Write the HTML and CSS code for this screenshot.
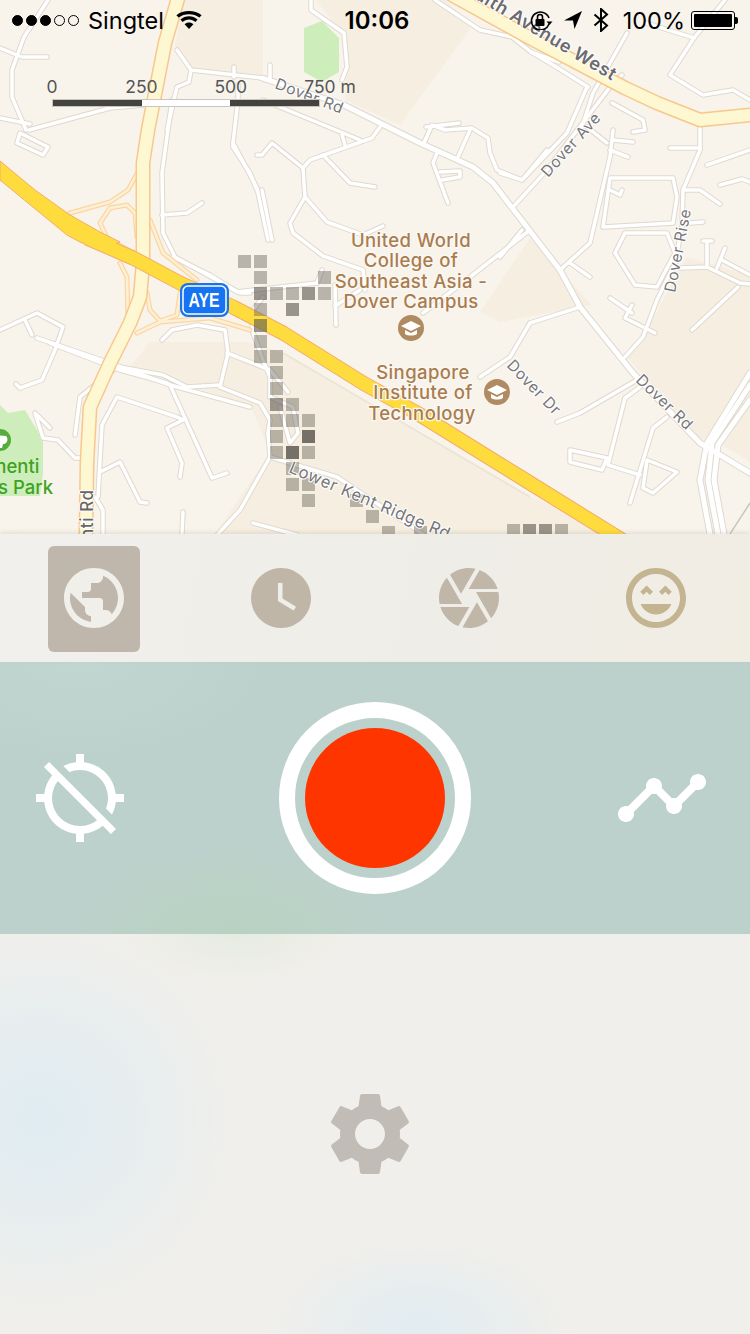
FILE: index.html
```html
<!DOCTYPE html>
<html lang="en">
<head>
  <meta charset="UTF-8">
  <meta name="viewport" content="width=device-width, initial-scale=1.0">
  <title>Tracker</title>
  <link rel="stylesheet" href="styles.css">
</head>
<body>
  <div class="app">

    <section class="map">
      <svg class="map-canvas" width="750" height="534" viewBox="0 0 750 534">
        <defs>
          <g id="minorRoads">
            <!-- top left -->
            <path d="M48 0L24 37L12 70L12 97L26 130"/>
            <path d="M0 48L22 57L47 57"/>
            <path d="M17 143L43 155L48 147L20 133Z"/>
            <path d="M29 130L110 108L143 105"/>
            <path d="M0 118L30 124"/>
            <!-- top middle -->
            <path d="M311 0L311 10L344 33L347 67L342 80"/>
            <path d="M177 50L191 70L263 78"/>
            <path d="M234 67L234 77M270 65L270 78"/>
            <path d="M191 70L189 82L177 87L167 130"/>
            <path d="M238 85L238 100L233 143L257 188L268 240M262 190L272 240"/>
            <path d="M263 100L360 140M342 135L345 145"/>
            <path d="M257 155L262 155L272 143L303 168L305 197L290 223L293 233L323 256L363 270L365 290"/>
            <path d="M305 197L327 222L363 235L383 226"/>
            <path d="M303 168L310 160L372 138L380 127"/>
            <path d="M323 155L350 183L375 187"/>
            <path d="M423 145L432 125L445 130L472 128L488 138L490 153L497 170L522 180L547 150"/>
            <path d="M470 130L458 157"/>
            <path d="M437 153L433 163L448 203"/>
            <path d="M440 172L460 171L460 177L442 180"/>
            <path d="M426 127L459 123"/>
            <path d="M435 0L480 30L512 37L531 52L553 65L588 87L577 80"/>
            <path d="M531 52L559 62"/>
            <path d="M627 33L593 93L581 130"/>
            <path d="M646 23L694 38L670 75L703 95L733 90L750 100"/>
            <path d="M694 38L725 0"/>
            <!-- left of the expressway -->
            <path d="M172 100L162 173L163 233L175 257L240 293L250 293"/>
            <path d="M162 215L187 213L202 203"/>
            <path d="M233 143L233 147L250 173L257 190"/>
            <path d="M0 330L37 313L63 327L55 350L42 380L20 388L16 384"/>
            <path d="M25 320L32 335"/>
            <path d="M37 338L110 363L170 385L250 407"/>
            <path d="M50 343L120 370L167 383"/>
            <path d="M120 367L163 375L187 387L220 385"/>
            <path d="M117 367L80 397L75 435"/>
            <path d="M98 497L102 425L117 397L177 417L183 420"/>
            <path d="M100 472L120 462L140 502L147 503"/>
            <path d="M183 420L167 428L182 463L180 477"/>
            <path d="M170 385L212 478L227 473"/>
            <path d="M50 428L35 413L43 438L58 440L75 458L83 458"/>
            <path d="M162 340L172 330L197 325L225 330L228 353L220 387"/>
            <path d="M95 497L103 510L103 533"/>
            <path d="M183 512L182 533"/>
            <path d="M227 353L270 370L288 392"/>
            <path d="M220 387L260 403L270 420L268 433L270 457L240 510L218 534"/>
            <path d="M270 397L293 407L298 433L290 443L280 407"/>
            <path d="M270 457L337 477L417 530L430 540"/>
            <path d="M253 523L297 535"/>
            <!-- middle -->
            <path d="M317 283L237 292L210 275L173 257"/>
            <path d="M317 283L322 270"/>
            <path d="M263 297L253 310L252 330L263 360L270 377L270 397"/>
            <path d="M335 285L336 325"/>
            <path d="M335 306L360 290"/>
            <path d="M530 230L470 277L423 313"/>
            <path d="M530 323L510 357L480 377"/>
            <!-- right -->
            <path d="M500 173L522 180L567 133L587 87"/>
            <path d="M513 207L547 170L610 87L622 75"/>
            <path d="M560 270L590 243L610 157L613 130"/>
            <path d="M607 143L587 127M613 140L633 142M610 150L628 157"/>
            <path d="M612 103L643 120L645 130L633 132"/>
            <path d="M570 263L590 277"/>
            <path d="M610 178L673 178L677 197L673 223L603 227Z"/>
            <path d="M610 190L620 195L622 190"/>
            <path d="M625 233L667 233L675 253L657 287L635 285L615 253Z"/>
            <path d="M700 123L700 150L683 190L682 227L675 263L657 300L643 337L625 357"/>
            <path d="M670 148L700 148"/>
            <path d="M685 190L700 190L720 204"/>
            <path d="M707 165L750 150"/>
            <path d="M720 185L742 179L750 182"/>
            <path d="M690 223L703 222"/>
            <path d="M703 241L712 241M707 241L707 267L680 268"/>
            <path d="M707 267L740 283L750 284M717 268L725 248M722 260L750 275"/>
            <path d="M738 287L692 330"/>
            <path d="M610 298L632 313M632 305L625 318L655 333"/>
            <path d="M580 307L530 323"/>
            <path d="M637 380L580 413L557 422"/>
            <path d="M640 387L625 398L608 465L640 475"/>
            <path d="M570 450L607 458L602 470L570 462Z"/>
            <path d="M667 417L653 428L638 477L630 503"/>
            <path d="M647 460L677 472L653 493L643 488Z"/>
            <path d="M500 257L522 230"/>
          </g>
          <g id="mainRoads">
            <path d="M262 78L344 105L420 143L473 167L493 183L523 222L560 270L580 307L633 373L700 443L750 473"/>
            <path d="M750 373L707 443L700 480L710 534"/>
            <path d="M750 385L712 443L708 480L718 534"/>
            <path d="M750 400L718 445L714 480L724 534"/>
          </g>
          <g id="ramps">
            <path d="M70 213L110 202L128 190L138 172"/>
            <path d="M137 237L135 213L127 205L110 208L100 223L107 238L133 253"/>
            <path d="M120 263L127 277L128 320"/>
            <path d="M150 220L163 253L197 280"/>
            <path d="M147 293L150 310L160 321L177 315L180 293"/>
            <path d="M137 333L160 322L210 318L250 330"/>
          </g>
          <g id="trunkRoads">
            <path d="M179 -5L165 43L148 130L143 163L143 263L140 297L130 323L110 363L90 407L87 463L86 534"/>
            <path d="M452 -5L530 38L625 88L657 103L700 120L750 115"/>
          </g>
          <g id="capIcon">
            <circle r="13" class="cap-badge"/>
            <path class="cap-glyph" d="M0 -7L10 -2L0 3L-10 -2Z"/>
            <path class="cap-glyph" d="M-6 2L0 5L6 2L6 6C3 8 -3 8 -6 6Z"/>
          </g>
        </defs>

        <rect class="land" width="750" height="534"/>

        <polygon class="area" points="183,0 263,0 263,80 190,68 175,45"/>
        <polygon class="area" points="316,0 445,0 473,25 400,125 345,100 347,40"/>
        <polygon class="area" points="130,367 150,342 250,342 283,353 530,497 630,534 215,534 270,453 250,405 187,385 165,372"/>
        <polygon class="area" points="480,312 530,238 592,305 500,322"/>
        <polygon class="area" points="627,357 643,337 667,293 687,257 750,275 750,370 706,438 700,440"/>
        <polygon class="area" points="722,402 750,372 750,462 722,445"/>
        <polygon class="area-line" points="283,353 530,497"/>

        <polygon class="park" points="304,28 322,21 339,38 339,72 322,82 304,72"/>
        <polygon class="park" points="0,405 8,413 25,410 43,440 43,473 40,496 0,496"/>

        <use href="#minorRoads" class="road-case"/>
        <use href="#mainRoads" class="main-case"/>
        <use href="#minorRoads" class="road-fill"/>
        <use href="#mainRoads" class="main-fill"/>
        <path class="hairline" d="M730 534L750 503"/>

        <use href="#ramps" class="ramp-case"/>
        <use href="#ramps" class="ramp-fill"/>
        <use href="#trunkRoads" class="trunk-case"/>
        <use href="#trunkRoads" class="trunk-fill"/>

        <path class="aye-case" d="M87 238L133 258L180 283L233 307L283 333L363 383L417 413L530 483L630 545"/>
        <polygon class="aye-wide" points="0,161 35,190 70,215 100,232 120,242 100,250 80,242 67,235 0,180"/>
        <path class="aye-fill" d="M87 238L133 258L180 283L233 307L283 333L363 383L417 413L530 483L630 545"/>

        <g class="tiles-light">
          <rect x="238" y="255" width="13" height="13"/>
          <rect x="254" y="255" width="13" height="13"/>
          <rect x="254" y="271" width="13" height="13"/>
          <rect x="318" y="271" width="13" height="13"/>
          <rect x="270" y="287" width="13" height="13"/>
          <rect x="286" y="287" width="13" height="13"/>
          <rect x="318" y="287" width="13" height="13"/>
          <rect x="254" y="303" width="13" height="13"/>
          <rect x="254" y="335" width="13" height="13"/>
          <rect x="254" y="350" width="13" height="13"/>
          <rect x="270" y="350" width="13" height="13"/>
          <rect x="270" y="366" width="13" height="13"/>
          <rect x="270" y="382" width="13" height="13"/>
          <rect x="286" y="398" width="13" height="13"/>
          <rect x="270" y="414" width="13" height="13"/>
          <rect x="286" y="414" width="13" height="13"/>
          <rect x="302" y="414" width="13" height="13"/>
          <rect x="270" y="430" width="13" height="13"/>
          <rect x="270" y="446" width="13" height="13"/>
          <rect x="302" y="446" width="13" height="13"/>
          <rect x="286" y="462" width="13" height="13"/>
          <rect x="286" y="478" width="13" height="13"/>
          <rect x="302" y="478" width="13" height="13"/>
          <rect x="302" y="494" width="13" height="13"/>
          <rect x="350" y="494" width="13" height="13"/>
          <rect x="366" y="510" width="13" height="13"/>
          <rect x="382" y="526" width="13" height="13"/>
          <rect x="414" y="526" width="13" height="13"/>
          <rect x="507" y="524" width="13" height="13"/>
          <rect x="555" y="524" width="13" height="13"/>
        </g>
        <g class="tiles-mid">
          <rect x="254" y="287" width="13" height="13"/>
          <rect x="302" y="287" width="13" height="13"/>
          <rect x="286" y="303" width="13" height="13"/>
          <rect x="254" y="319" width="13" height="13"/>
          <rect x="270" y="398" width="13" height="13"/>
          <rect x="523" y="524" width="13" height="13"/>
          <rect x="539" y="524" width="13" height="13"/>
        </g>
        <g class="tiles-dark">
          <rect x="302" y="430" width="13" height="13"/>
          <rect x="286" y="446" width="13" height="13"/>
        </g>

        <!-- place names -->
        <g class="poi-label">
          <text x="411" y="247">United World</text>
          <text x="411" y="267">College of</text>
          <text x="411" y="288">Southeast Asia -</text>
          <text x="411" y="308">Dover Campus</text>
          <text x="423" y="379">Singapore</text>
          <text x="423" y="399">Institute of</text>
          <text x="422" y="420">Technology</text>
        </g>
        <use href="#capIcon" x="411" y="328"/>
        <use href="#capIcon" x="497" y="392"/>

        <circle class="park-pin" cx="0" cy="440" r="11"/>
        <path class="park-pin-glyph" d="M-6 435L6 436C9 439 7 444 3 444L2 448L-1 448L-1 444L-6 443Z"/>
        <text class="park-label" x="-10" y="473">menti</text>
        <text class="park-label" x="-2" y="494">s Park</text>

        <!-- road names -->
        <g class="road-label">
          <text transform="translate(274 88) rotate(21)">Dover Rd</text>
          <text transform="translate(548 178) rotate(-48)">Dover Ave</text>
          <text transform="translate(675 293) rotate(-79)">Dover Rise</text>
          <text transform="translate(506 366) rotate(46)">Dover Dr</text>
          <text transform="translate(635 381) rotate(44)">Dover Rd</text>
          <text class="road-label-large" transform="translate(288 472) rotate(23)">Lower Kent Ridge Rd</text>
          <text class="road-label-strong" transform="translate(93 539) rotate(-90)">nti Rd</text>
        </g>
        <text class="road-label-major" transform="translate(474 -2) rotate(31)">alth Avenue West</text>

        <!-- AYE shield -->
        <rect class="shield-outer" x="180" y="283" width="49" height="34" rx="8"/>
        <rect class="shield-inner" x="183" y="286" width="43" height="28" rx="5"/>
        <text class="shield-text" x="204" y="307" textLength="31" lengthAdjust="spacingAndGlyphs">AYE</text>
      </svg>

      <div class="scale">
        <div class="scale-labels">
          <div class="scale-tick"><span>0</span></div>
          <div class="scale-tick"><span>250</span></div>
          <div class="scale-tick"><span>500</span></div>
          <div class="scale-tick scale-tick-last"><span>750 m</span></div>
        </div>
        <div class="scale-bar">
          <div class="scale-seg scale-dark"></div>
          <div class="scale-seg scale-light"></div>
          <div class="scale-seg scale-dark"></div>
        </div>
      </div>

      <header class="status-bar">
        <div class="status-left">
          <div class="signal">
            <span class="dot dot-on"></span>
            <span class="dot dot-on"></span>
            <span class="dot dot-on"></span>
            <span class="dot"></span>
            <span class="dot"></span>
          </div>
          <span class="carrier">Singtel</span>
          <svg class="wifi" width="26" height="18" viewBox="0 0 26 18">
            <path d="M13 18L8.6 13.2C11 10.8 15 10.8 17.4 13.2Z"/>
            <path d="M6.6 11L4.4 8.6C9 4 17 4 21.6 8.6L19.4 11C16 7.6 10 7.6 6.6 11Z"/>
            <path d="M2.6 6.6L0.4 4.2C7.2 -1.4 18.8 -1.4 25.6 4.2L23.4 6.6C17.8 2 8.2 2 2.6 6.6Z"/>
          </svg>
        </div>
        <div class="status-time">10:06</div>
        <div class="status-right">
          <svg class="rotation-lock" width="24" height="20" viewBox="0 0 24 20">
            <path d="M20 14A9 9 0 1 1 20 8" class="lock-ring"/>
            <path d="M17.5 11.5L23.5 11.5L20.5 15Z"/>
            <rect x="6.5" y="9" width="9" height="7" rx="1"/>
            <path d="M8.5 9V7A2.5 2.5 0 0 1 13.5 7V9" class="lock-shackle"/>
          </svg>
          <svg class="arrow" width="18" height="18" viewBox="0 0 18 18">
            <path d="M0 9.5L18 0L10.5 18L9 9.5Z"/>
          </svg>
          <svg class="bluetooth" width="16" height="24" viewBox="0 0 16 24">
            <path d="M1.5 6.5L14 17.5L8 23V1L14 6.5L1.5 17.5" class="bt-line"/>
          </svg>
          <span class="battery-text">100%</span>
          <div class="battery">
            <div class="battery-body"><div class="battery-level"></div></div>
            <div class="battery-nub"></div>
          </div>
        </div>
      </header>
    </section>

    <nav class="tabs">
      <div class="tab tab-active">
        <svg class="tab-icon icon-globe" width="72" height="72" viewBox="0 0 24 24">
          <path d="M12 2C6.48 2 2 6.48 2 12s4.48 10 10 10 10-4.48 10-10S17.52 2 12 2zm-1 17.93c-3.95-.49-7-3.85-7-7.93 0-.62.08-1.21.21-1.79L9 15v1c0 1.1.9 2 2 2v1.93zm6.9-2.54c-.26-.81-1-1.39-1.9-1.39h-1v-3c0-.55-.45-1-1-1H8v-2h2c.55 0 1-.45 1-1V7h2c1.1 0 2-.9 2-2v-.41c2.93 1.19 5 4.06 5 7.41 0 2.08-.8 3.97-2.1 5.39z"/>
        </svg>
      </div>
      <div class="tab">
        <svg class="tab-icon icon-clock" width="72" height="72" viewBox="0 0 24 24">
          <path d="M12 2C6.5 2 2 6.5 2 12s4.5 10 10 10 10-4.5 10-10S17.5 2 12 2zm4.2 14.2L11 13V7h1.5v5.2l4.5 2.7-.8 1.3z"/>
        </svg>
      </div>
      <div class="tab">
        <svg class="tab-icon icon-shutter" width="72" height="72" viewBox="0 0 24 24">
          <path d="M9.4 10.5l4.77-8.26C13.47 2.09 12.75 2 12 2c-2.4 0-4.6.85-6.32 2.25l3.66 6.35.06-.1zM21.54 9c-.92-2.92-3.15-5.26-6-6.34L11.88 9h9.66zm.26 1h-7.49l.29.5 4.76 8.25C21 16.97 22 14.61 22 12c0-.69-.07-1.35-.2-2zM8.54 12l-3.9-6.75C3.01 7.03 2 9.39 2 12c0 .69.07 1.35.2 2h7.49l-1.15-2zm-6.08 3c.92 2.92 3.15 5.26 6 6.34L12.12 15H2.46zm11.27 0l-3.9 6.76c.7.15 1.42.24 2.17.24 2.4 0 4.6-.85 6.32-2.25l-3.66-6.35-.93 1.6z"/>
        </svg>
      </div>
      <div class="tab">
        <svg class="tab-icon icon-smile" width="72" height="72" viewBox="0 0 24 24">
          <path d="M11.99 2C6.47 2 2 6.47 2 12s4.47 10 9.99 10S22 17.53 22 12 17.51 2 11.99 2zM12 20c-4.42 0-8-3.58-8-8s3.58-8 8-8 8 3.58 8 8-3.58 8-8 8z"/>
          <path d="M13 9.94L14.06 11l1.06-1.06L16.18 11l1.06-1.06-2.12-2.12zM8.88 9.94L9.94 11 11 9.94 8.88 7.82 6.76 9.94 7.82 11zM12 17.5c2.33 0 4.31-1.46 5.11-3.5H6.89c.8 2.04 2.78 3.5 5.11 3.5z"/>
        </svg>
      </div>
    </nav>

    <section class="recorder">
      <svg class="side-icon side-icon-left" width="96" height="96" viewBox="0 0 24 24">
        <path d="M20.94 11c-.46-4.17-3.77-7.48-7.94-7.94V1h-2v2.06c-1.13.12-2.19.46-3.16.97l1.5 1.5C10.16 5.19 11.06 5 12 5c3.87 0 7 3.13 7 7 0 .94-.19 1.84-.52 2.65l1.5 1.5c.5-.96.84-2.02.97-3.15H23v-2h-2.06zM3 4.27l2.04 2.04C3.97 7.62 3.25 9.23 3.06 11H1v2h2.06c.46 4.17 3.77 7.48 7.94 7.94V23h2v-2.06c1.77-.2 3.38-.91 4.69-1.98L19.73 21 21 19.73 4.27 3 3 4.27zm13.27 13.27C15.09 18.45 13.61 19 12 19c-3.87 0-7-3.13-7-7 0-1.61.55-3.09 1.46-4.27l9.81 9.81z"/>
      </svg>
      <div class="record-btn"><div class="record-dot"></div></div>
      <svg class="side-icon side-icon-right" width="96" height="96" viewBox="0 0 24 24">
        <path d="M23 8c0 1.1-.9 2-2 2-.18 0-.35-.02-.51-.07l-3.56 3.55c.05.16.07.34.07.52 0 1.1-.9 2-2 2s-2-.9-2-2c0-.18.02-.36.07-.52l-2.55-2.55c-.16.05-.34.07-.52.07s-.36-.02-.52-.07l-4.55 4.56c.05.16.07.33.07.51 0 1.1-.9 2-2 2s-2-.9-2-2 .9-2 2-2c.18 0 .35.02.51.07l4.56-4.55C8.02 9.36 8 9.18 8 9c0-1.1.9-2 2-2s2 .9 2 2c0 .18-.02.36-.07.52l2.55 2.55c.16-.05.34-.07.52-.07s.36.02.52.07l3.55-3.56C19.02 8.35 19 8.18 19 8c0-1.1.9-2 2-2s2 .9 2 2z"/>
      </svg>
    </section>

    <section class="settings">
      <svg class="gear" width="100" height="100" viewBox="0 0 24 24">
        <path d="M19.14 12.94c.04-.3.06-.61.06-.94 0-.32-.02-.64-.07-.94l2.03-1.58c.18-.14.23-.41.12-.61l-1.92-3.32c-.12-.22-.37-.29-.59-.22l-2.39.96c-.5-.38-1.03-.7-1.62-.94l-.36-2.54c-.04-.24-.24-.41-.48-.41h-3.84c-.24 0-.43.17-.47.41l-.36 2.54c-.59.24-1.13.57-1.62.94l-2.39-.96c-.22-.08-.47 0-.59.22L2.74 8.87c-.12.21-.08.47.12.61l2.03 1.58c-.05.3-.09.63-.09.94s.02.64.07.94l-2.03 1.58c-.18.14-.23.41-.12.61l1.92 3.32c.12.22.37.29.59.22l2.39-.96c.5.38 1.03.7 1.62.94l.36 2.54c.05.24.24.41.48.41h3.84c.24 0 .44-.17.47-.41l.36-2.54c.59-.24 1.13-.56 1.62-.94l2.39.96c.22.08.47 0 .59-.22l1.92-3.32c.12-.22.07-.47-.12-.61l-2.01-1.58zM12 15.6c-1.98 0-3.6-1.62-3.6-3.6s1.62-3.6 3.6-3.6 3.6 1.62 3.6 3.6-1.62 3.6-3.6 3.6z"/>
      </svg>
    </section>

  </div>
</body>
</html>
```
FILE: styles.css
```css
* {
  box-sizing: border-box;
  margin: 0;
  padding: 0;
}

html, body {
  width: 750px;
  height: 1334px;
  overflow: hidden;
  font-family: Inter, "Liberation Sans", Arial, sans-serif;
}

.app {
  display: flex;
  flex-direction: column;
  width: 750px;
  height: 1334px;
}

/* map */
.map {
  position: relative;
  flex: 0 0 534px;
  overflow: hidden;
  background: #f8f4ec;
}

.map-canvas {
  display: block;
}

.land { fill: #f8f4ec; }
.area { fill: #f6efe1; }
.area-line { fill: none; stroke: #ece5d6; stroke-width: 2; }
.park { fill: #cdeebb; }

#minorRoads path, #mainRoads path, #ramps path, #trunkRoads path {
  fill: none;
  stroke-linejoin: round;
  stroke-linecap: round;
}

.road-case { stroke: #dfd9cf; stroke-width: 5.5; }
.road-fill { stroke: #ffffff; stroke-width: 3.5; }
.main-case { stroke: #dfd9cf; stroke-width: 7; }
.main-fill { stroke: #ffffff; stroke-width: 5; }
.ramp-case { stroke: #fbd6a0; stroke-width: 5; }
.ramp-fill { stroke: #fdf0d6; stroke-width: 2.5; }
.trunk-case { stroke: #f9c78c; stroke-width: 15; }
.trunk-fill { stroke: #fdf7d2; stroke-width: 12; }

.hairline { fill: none; stroke: #c9c6c0; stroke-width: 1.5; }

.aye-case { fill: none; stroke: #f3ab6a; stroke-width: 15; stroke-linejoin: round; }
.aye-fill { fill: none; stroke: #ffdc3e; stroke-width: 13; stroke-linejoin: round; }
.aye-wide { fill: #ffdc3e; stroke: #f3ab6a; stroke-width: 1; stroke-linejoin: round; }

.tiles-light { fill: #5f5a52; fill-opacity: 0.42; }
.tiles-mid { fill: #5f5a52; fill-opacity: 0.62; }
.tiles-dark { fill: #5f5a52; fill-opacity: 0.85; }

.poi-label text {
  font-size: 18.5px;
  font-weight: 500;
  letter-spacing: 0.4px;
  text-anchor: middle;
  fill: #a97c50;
  stroke: #fbf8f2;
  stroke-width: 2.5px;
  paint-order: stroke;
}

.cap-badge { fill: #b08a60; }
.cap-glyph { fill: #ffffff; }

.park-pin { fill: #57ad3c; }
.park-pin-glyph { fill: #ffffff; }

.park-label {
  font-size: 18.5px;
  font-weight: 500;
  fill: #3ea322;
}

.road-label text {
  font-size: 15.5px;
  letter-spacing: 0.6px;
  fill: #77767a;
  stroke: #ffffff;
  stroke-width: 2px;
  paint-order: stroke;
}

.road-label .road-label-large {
  font-size: 16.5px;
}

.road-label .road-label-strong {
  font-size: 17px;
  font-weight: 500;
  fill: #66656a;
}

.road-label-major {
  font-size: 18px;
  font-weight: 600;
  letter-spacing: 0.6px;
  fill: #6b6a6e;
  stroke: #ffffff;
  stroke-width: 2px;
  paint-order: stroke;
}

.shield-outer { fill: #1673f2; }
.shield-inner { fill: #1673f2; stroke: #ffffff; stroke-width: 1.5; }

.shield-text {
  font-family: "Liberation Sans", sans-serif;
  font-size: 20px;
  font-weight: bold;
  text-anchor: middle;
  fill: #ffffff;
}

/* scale bar */
.scale {
  position: absolute;
  top: 76px;
  left: 52px;
  width: 268px;
  color: #555555;
  font-size: 17.5px;
}

.scale-labels {
  display: flex;
  height: 22px;
}

.scale-tick {
  flex: 0 0 89.4px;
  white-space: nowrap;
}

.scale-tick span {
  display: inline-block;
  transform: translateX(-50%);
}

.scale-tick-last span {
  transform: translateX(-16px);
}

.scale-bar {
  display: flex;
  height: 8px;
  margin-top: 1px;
  border: 1px solid #c9c6c0;
}

.scale-seg {
  flex: 1;
}

.scale-dark { background: #444340; }
.scale-light { background: #ffffff; }

/* status bar */
.status-bar {
  position: absolute;
  top: 0;
  left: 0;
  display: flex;
  align-items: center;
  width: 750px;
  height: 40px;
  padding: 0 12px;
  color: #000000;
  font-size: 23.5px;
}

.status-left, .status-right {
  display: flex;
  flex: 1;
  align-items: center;
}

.status-right {
  justify-content: flex-end;
}

.signal {
  display: flex;
  gap: 3px;
}

.dot {
  width: 11px;
  height: 11px;
  border: 1px solid #000000;
  border-radius: 50%;
}

.dot-on {
  background: #000000;
}

.carrier {
  margin-left: 9px;
}

.wifi {
  margin-left: 12px;
  fill: #000000;
}

.status-time {
  margin-left: 4px;
  font-weight: 600;
  font-size: 24px;
}

.rotation-lock {
  margin-right: 11px;
  fill: #000000;
}

.lock-ring, .lock-shackle {
  fill: none;
  stroke: #000000;
  stroke-width: 1.6;
}

.arrow {
  margin-right: 11px;
  fill: #000000;
}

.bluetooth {
  margin-right: 14px;
}

.bt-line {
  fill: none;
  stroke: #000000;
  stroke-width: 2;
}

.battery-text {
  margin-right: 6px;
}

.battery {
  display: flex;
  align-items: center;
}

.battery-body {
  width: 44px;
  height: 19px;
  padding: 2px;
  border: 1px solid #000000;
  border-radius: 3px;
}

.battery-level {
  height: 100%;
  background: #000000;
  border-radius: 1px;
}

.battery-nub {
  width: 3px;
  height: 7px;
  background: #000000;
  border-radius: 0 2px 2px 0;
}

/* icon row */
.tabs {
  position: relative;
  display: flex;
  flex: 0 0 128px;
  justify-content: space-between;
  align-items: center;
  padding: 0 48px;
  background: linear-gradient(100deg, #f2f0ec 0%, #efede8 55%, #f1ede3 100%);
  box-shadow: 0 -2px 4px rgba(90, 80, 60, 0.12);
}

.tab {
  display: flex;
  justify-content: center;
  align-items: center;
  width: 92px;
  height: 106px;
  margin-top: 2px;
  margin-right: 3px;
  padding-bottom: 2px;
  border-radius: 6px;
}

.tab:last-child {
  margin-right: 0;
}

.tab-active {
  background: #bfb7ac;
}

.icon-globe { fill: #f1efea; }
.icon-clock { fill: #c0b6a8; }
.icon-shutter { fill: #c1b7a9; }
.icon-smile { fill: #c4b491; }

/* record panel */
.recorder {
  display: grid;
  flex: 0 0 272px;
  grid-template-columns: 1fr 192px 1fr;
  align-items: center;
  background:
    radial-gradient(ellipse 170px 90px at 230px 272px, #b7d2c1 0%, rgba(183, 210, 193, 0) 100%),
    radial-gradient(ellipse 200px 100px at 80px 0, #c2d6d1 0%, rgba(194, 214, 209, 0) 100%),
    #bdd1cc;
}

.side-icon {
  fill: #ffffff;
}

.side-icon-left {
  margin-left: 32px;
}

.side-icon-right {
  justify-self: end;
  margin-right: 40px;
}

.record-btn {
  display: flex;
  justify-content: center;
  align-items: center;
  width: 192px;
  height: 192px;
  border: 16px solid #ffffff;
  border-radius: 50%;
}

.record-dot {
  width: 140px;
  height: 140px;
  background: #ff3500;
  border-radius: 50%;
}

/* settings area */
.settings {
  display: flex;
  flex: 1;
  justify-content: center;
  padding-top: 150px;
  background:
    radial-gradient(ellipse 110px 50px at 235px 0, #e6ebe0 0%, rgba(230, 235, 224, 0) 100%),
    radial-gradient(ellipse 210px 210px at 40px 185px, #dfecf2 0%, rgba(223, 236, 242, 0) 100%),
    radial-gradient(ellipse 160px 90px at 420px 390px, #e1ecf1 0%, rgba(225, 236, 241, 0) 100%),
    #f1efeb;
}

.gear {
  margin-right: 10px;
  fill: #c1bcb5;
}
```
